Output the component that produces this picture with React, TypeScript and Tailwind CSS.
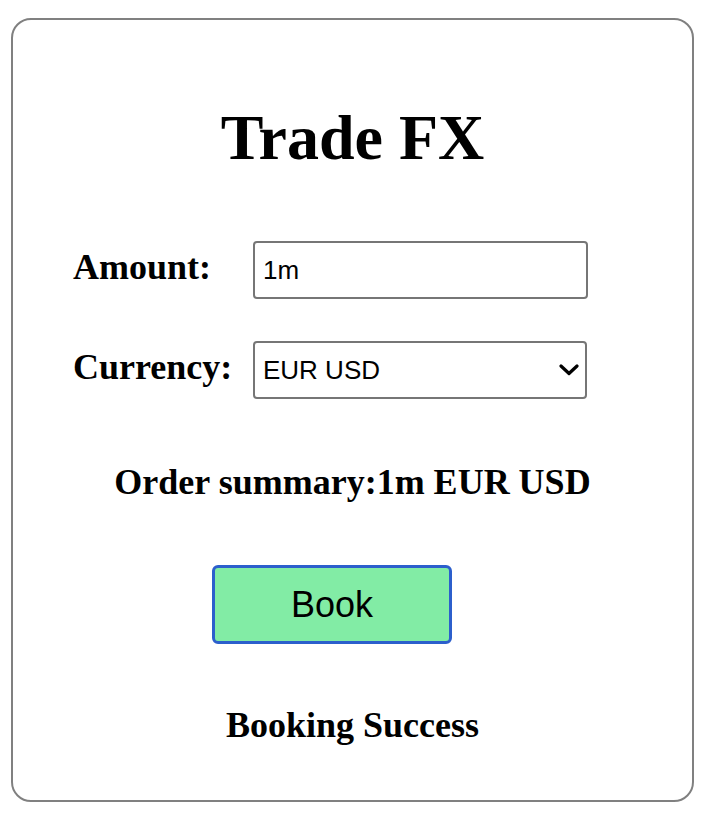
import React from 'react';

const App = () => {
  return (
    <div className="min-h-screen bg-white pt-[18px] pl-[11px]">
      <div className="w-[683px] h-[784px] box-border border-2 border-[#808080] rounded-[20px] flex flex-col pt-[86px] font-['Liberation_Serif',serif] text-black">
        <h1 className="text-[64px] leading-none font-bold text-center">Trade FX</h1>

        <form className="ml-[60px] w-[514px] mt-[71px] flex flex-col gap-[42px]">
          <div className="flex items-baseline">
            <label className="w-[180px] shrink-0 text-[36px] leading-none font-bold">Amount:</label>
            <input
              defaultValue="1m"
              className="w-[335px] h-[58px] box-border border-2 border-[#767676] rounded-[4px] px-2 text-[26px] font-['Liberation_Sans',sans-serif] outline-none"
            />
          </div>
          <div className="flex items-baseline">
            <label className="w-[180px] shrink-0 text-[36px] leading-none font-bold">Currency:</label>
            <div className="relative w-[335px]">
              <select className="w-full h-[58px] box-border appearance-none border-2 border-[#767676] rounded-[4px] px-2 text-[26px] font-['Liberation_Sans',sans-serif] bg-white outline-none">
                <option>EUR USD</option>
                <option>GBP USD</option>
                <option>USD JPY</option>
              </select>
              <svg
                className="absolute right-[8px] top-[23px] pointer-events-none"
                width="20"
                height="12"
                viewBox="0 0 20 12"
              >
                <polyline points="2,2 10,9.5 18,2" fill="none" stroke="black" strokeWidth="3.2" strokeLinecap="round" strokeLinejoin="round" />
              </svg>
            </div>
          </div>
        </form>

        <p className="mt-[65px] text-[36px] leading-none font-bold text-center">Order summary:1m EUR USD</p>

        <div className="mt-[65px] pl-[199px]">
          <button
            type="button"
            className="w-[240px] h-[79px] box-border bg-[#82eca5] border-[3px] border-[#2c5fcc] rounded-[6px] text-[36px] font-['Liberation_Sans',sans-serif] text-black"
          >
            Book
          </button>
        </div>

        <p className="mt-[63px] text-[36px] leading-none font-bold text-center">Booking Success</p>
      </div>
    </div>
  );
};

export default App;
